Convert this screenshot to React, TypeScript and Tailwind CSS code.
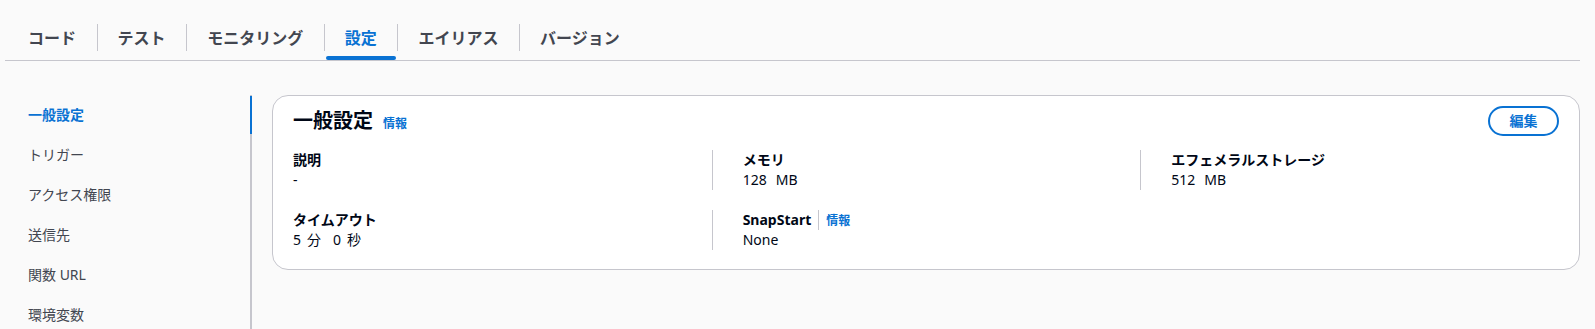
import React from "react";

const FONT = '"Noto Sans", "Noto Sans CJK JP", sans-serif';

const tabs = ["コード", "テスト", "モニタリング", "設定", "エイリアス", "バージョン"];
const side = ["一般設定", "トリガー", "アクセス権限", "送信先", "関数 URL", "環境変数"];

function Info() {
  return <span className="text-[12px] font-bold text-[#0972d3] leading-[16px]">情報</span>;
}

export default function App() {
  return (
    <div className="w-full h-[329px] overflow-hidden bg-[#fafafa] text-[#000716]" style={{ fontFamily: FONT }}>
      {/* Tabs */}
      <div className="ml-[5px] mr-[15px] pt-[16px] border-b border-[#c6c6cd] flex">
        <div className="w-[2px] shrink-0" />
        {tabs.map((t, i) => (
          <div
            key={t}
            className={`relative h-[44px] flex items-center pl-[21px] pr-[20.6px] text-[16px] font-bold leading-[20px] ${
              t === "設定" ? "text-[#0972d3]" : "text-[#424650]"
            }`}
          >
            {i > 0 && <span className="absolute left-0 top-[8px] h-[27px] w-px bg-[#c6c6cd]" />}
            {t}
            {t === "設定" && (
              <span className="absolute left-[2px] right-[1px] bottom-[0px] h-[4px] rounded-full bg-[#0972d3]" />
            )}
          </div>
        ))}
      </div>

      {/* Body */}
      <div className="flex mt-[34px]">
        <div className="w-[252px] h-[240px] border-r-2 border-[#c6c6cd] flex flex-col">
          {side.map((s, i) => (
            <div
              key={s}
              className={`relative h-[40px] shrink-0 flex items-center pl-[28px] text-[14px] leading-[20px] ${
                i === 0 ? "text-[#0972d3] font-bold" : "text-[#424650]"
              }`}
            >
              {s}
              {i === 0 && <span className="absolute right-[-2px] top-[1px] h-[38px] w-[2px] bg-[#0972d3]" />}
            </div>
          ))}
        </div>

        <div className="ml-[20px] mr-[15px] flex-1 h-[175px] bg-white border border-[#c6c6cd] rounded-[16px] px-[20px] pt-[10px] pb-[19px]">
          <div className="flex items-center justify-between h-[30px]">
            <div className="flex items-center">
              <span className="text-[20px] font-bold leading-[24px] text-[#000716]">一般設定</span>
              <span className="ml-[10px] mt-[2px]">
                <Info />
              </span>
            </div>
            <button className="w-[71px] h-[30px] rounded-full border-2 border-[#0972d3] text-[#0972d3] text-[14px] font-bold leading-[18px] flex items-center justify-center bg-white">
              編集
            </button>
          </div>

          <div className="mt-[14px] mx-[-10px] grid grid-cols-3 gap-y-[20px] text-[14px] leading-[20px]">
            <div className="pl-[10px]">
              <div className="font-bold">説明</div>
              <div>-</div>
            </div>
            <div className="border-l border-[#c6c6cd] pl-[30px]">
              <div className="font-bold">メモリ</div>
              <div>
                <span>128</span>
                <span className="ml-[9px]">MB</span>
              </div>
            </div>
            <div className="border-l border-[#c6c6cd] pl-[30px]">
              <div className="font-bold">エフェメラルストレージ</div>
              <div>
                <span>512</span>
                <span className="ml-[9px]">MB</span>
              </div>
            </div>
            <div className="pl-[10px]">
              <div className="font-bold">タイムアウト</div>
              <div>
                <span>5</span>
                <span className="ml-[6px]">分</span>
                <span className="ml-[12px]">0</span>
                <span className="ml-[6px]">秒</span>
              </div>
            </div>
            <div className="border-l border-[#c6c6cd] pl-[30px]">
              <div className="flex items-center">
                <span className="font-bold">SnapStart</span>
                <span className="ml-[7px] h-[20px] w-px bg-[#c6c6cd]" />
                <span className="ml-[7px]">
                  <Info />
                </span>
              </div>
              <div>None</div>
            </div>
            <div />
          </div>
        </div>
      </div>
    </div>
  );
}
